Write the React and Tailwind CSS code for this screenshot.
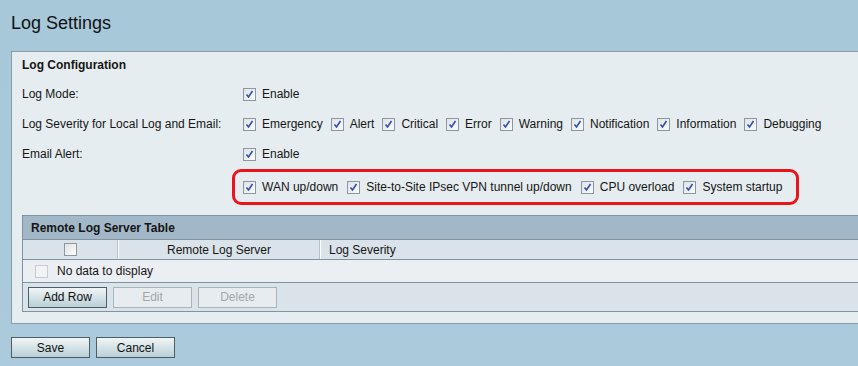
import React from 'react';

const SEVERITIES = ['Emergency', 'Alert', 'Critical', 'Error', 'Warning', 'Notification', 'Information', 'Debugging'];
const ALERTS = ['WAN up/down', 'Site-to-Site IPsec VPN tunnel up/down', 'CPU overload', 'System startup'];

function Check({ checked = true, disabled = false }) {
    return (
        <span
            className={`inline-flex w-[13px] h-[13px] shrink-0 items-center justify-center border ${
                disabled ? 'border-[#c4ccd2] bg-[#f1f3f5]' : 'border-[#8e979e] bg-gradient-to-br from-[#dfe3e7] to-[#fbfcfd]'
            }`}
        >
            {checked && (
                <svg width="9" height="9" viewBox="0 0 9 9">
                    <path d="M1.5 4.5 L3.5 7 L7.5 1" fill="none" stroke="#2f4fb0" strokeWidth="1.6" />
                </svg>
            )}
        </span>
    );
}

function Option({ label, className = 'mr-[8px]' }) {
    return (
        <span className={`inline-flex items-center gap-[6px] ${className}`}>
            <Check />
            <span>{label}</span>
        </span>
    );
}

function Button({ children, disabled = false, className = '' }) {
    return (
        <button
            className={`w-[79px] h-[21px] flex items-center justify-center text-[12px] border ${
                disabled
                    ? 'border-[#a9b3ba] bg-[#e6ecef] text-[#a3a7ab]'
                    : 'border-[#4d5d66] bg-gradient-to-b from-[#f1f5f6] to-[#b9d0d6] text-[#111]'
            } ${className}`}
        >
            {children}
        </button>
    );
}

export default function App() {
    return (
        <div
            className="w-[858px] h-[366px] overflow-hidden bg-gradient-to-b from-[#a6c8d9] to-[#abcbdc] text-[#151515] text-[12px]"
            style={{ fontFamily: '"Liberation Sans", Arial, sans-serif' }}
        >
            <h1 className="pl-[11px] pt-[13px] h-[51px] text-[18px] leading-[20px] text-[#111]">Log Settings</h1>

            <div className="ml-[11px] w-[870px] h-[273px] border border-[#8c9ca6] bg-[#e6edf0] pl-[10px]">
                <div className="h-[27px] pt-[6px] font-bold leading-[14px]">Log Configuration</div>

                <div className="flex items-center h-[30px]">
                    <div className="w-[221px] shrink-0">Log Mode:</div>
                    <Option label="Enable" />
                </div>

                <div className="flex items-center h-[30px]">
                    <div className="w-[221px] shrink-0">Log Severity for Local Log and Email:</div>
                    {SEVERITIES.map(s => (
                        <Option key={s} label={s} />
                    ))}
                </div>

                <div className="flex items-center h-[30px]">
                    <div className="w-[221px] shrink-0">Email Alert:</div>
                    <Option label="Enable" />
                </div>

                {/* highlighted alert options */}
                <div className="ml-[210px] w-fit h-[36px] flex items-center border-[3px] border-[#e8151c] rounded-[9px] pl-[8px] pr-[5px]">
                    {ALERTS.map(a => (
                        <Option key={a} label={a} className="mr-[9px]" />
                    ))}
                </div>

                <div className="mt-[10px] border border-[#7f949f]">
                    <div className="h-[24px] flex items-center pl-[8px] bg-[#a2b8c8] font-bold border-b border-[#7f949f]">
                        Remote Log Server Table
                    </div>
                    <div className="h-[20px] flex bg-[#dbe3ea] border-b border-[#7f949f]">
                        <div className="w-[95px] flex items-center justify-center border-r border-[#b3c1cb]">
                            <Check checked={false} />
                        </div>
                        <div className="w-[202px] flex items-center justify-center border-l border-white border-r border-r-[#b3c1cb]">
                            Remote Log Server
                        </div>
                        <div className="flex items-center pl-[8px] border-l border-white">Log Severity</div>
                    </div>
                    <div className="h-[23px] flex items-center gap-[9px] pl-[12px] bg-[#ebeff3] border-b border-[#7f949f]">
                        <Check checked={false} disabled />
                        <span>No data to display</span>
                    </div>
                    <div className="h-[28px] flex items-center gap-[6px] pl-[5px] bg-[#dbe3ea]">
                        <Button>Add Row</Button>
                        <Button disabled>Edit</Button>
                        <Button disabled>Delete</Button>
                    </div>
                </div>
            </div>

            <div className="flex gap-[6px] pl-[11px] pt-[13px]">
                <Button>Save</Button>
                <Button>Cancel</Button>
            </div>
        </div>
    );
}
